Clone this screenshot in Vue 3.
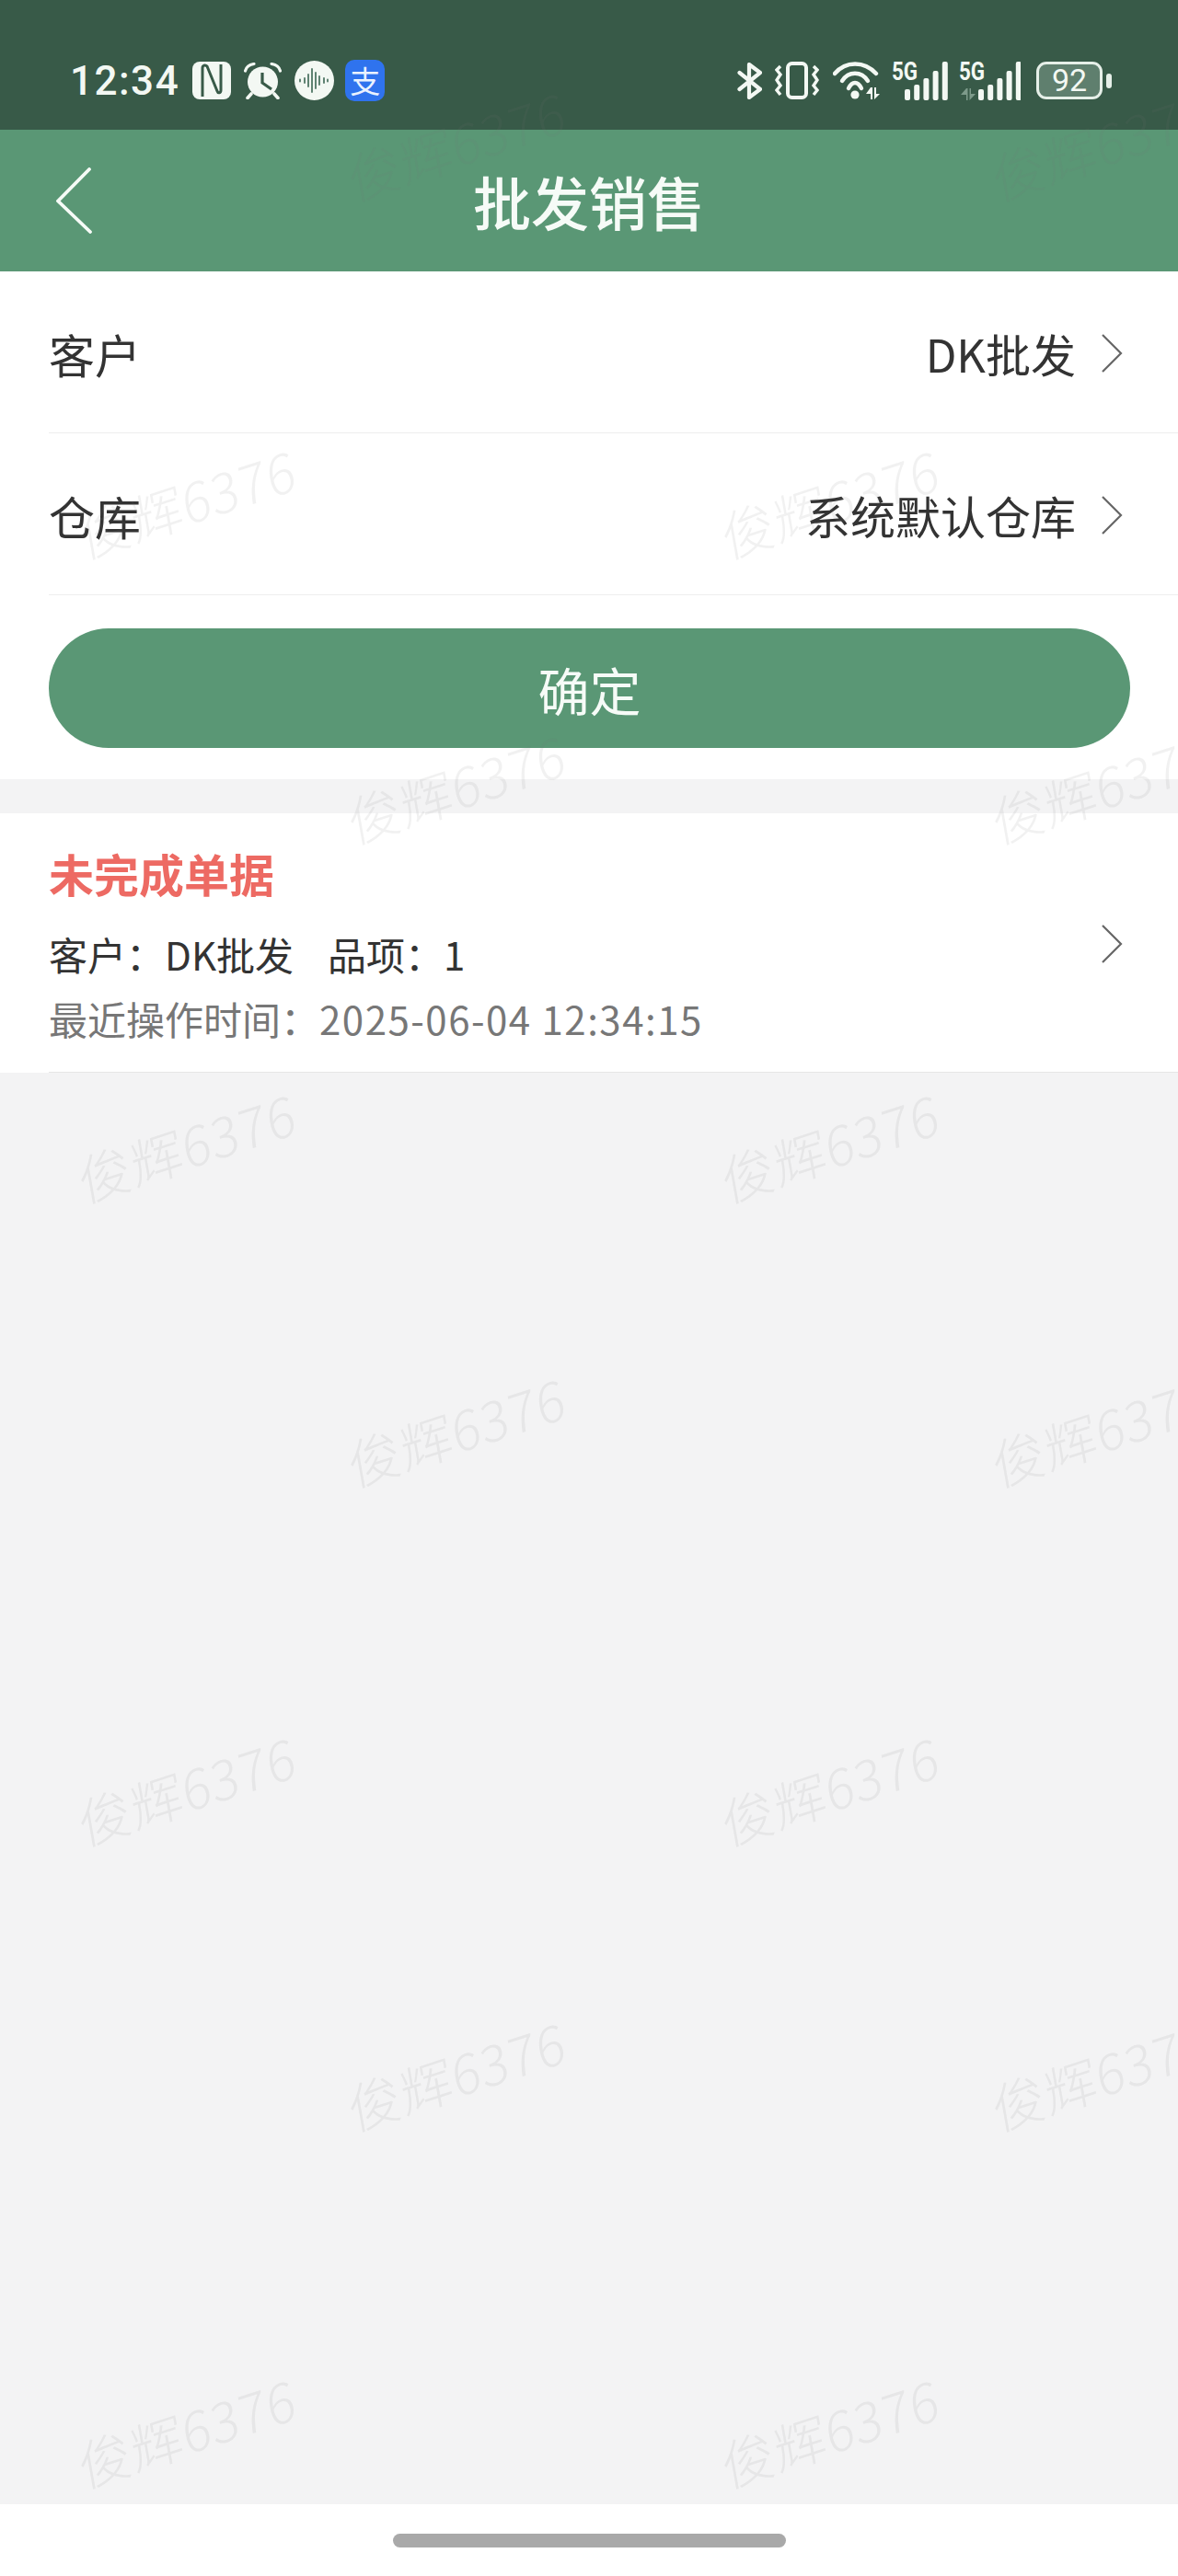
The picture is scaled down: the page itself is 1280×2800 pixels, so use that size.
<template>
  <div class="page">
    <div class="status-bar">
      <div class="status-left">
        <span class="clock">12:34</span>
        <!-- nfc -->
        <svg class="ic" width="42" height="41" viewBox="0 0 42 41">
          <rect width="42" height="41" rx="8" fill="#f3f8f3" />
          <path d="M11 38V7c0-3 3-4 5-2l11 27c1 3 4 2 4-1V3" fill="none" stroke="#385a48" stroke-width="3" />
        </svg>
        <!-- alarm -->
        <svg class="ic" width="41" height="40" viewBox="0 0 41 40">
          <circle cx="20.5" cy="21" r="16.5" fill="#f3f8f3" />
          <path d="M1.5 9 C3 4 6 2 11 1.5 M39.5 9 C38 4 35 2 30 1.5" fill="none" stroke="#f3f8f3" stroke-width="3.2" stroke-linecap="round" />
          <path d="M8 34 L4 38.5 M33 34 L37 38.5" stroke="#f3f8f3" stroke-width="3.6" stroke-linecap="round" />
          <path d="M20 11 V22 L30 29" fill="none" stroke="#385a48" stroke-width="3.2" />
        </svg>
        <!-- sound wave -->
        <svg class="ic" width="43" height="43" viewBox="0 0 43 43">
          <circle cx="21.5" cy="21.5" r="21.5" fill="#f3f8f3" />
          <path d="M6 20.5v2M11 19v5M15 15v13M19 9v25M23 13v17M27 17v9M32 19v5M36 20.5v2" stroke="#4f7564" stroke-width="1.8" stroke-linecap="round" />
        </svg>
        <!-- alipay -->
        <div class="alipay">支</div>
      </div>
      <div class="status-right">
        <!-- bluetooth -->
        <svg class="ic" width="27" height="40" viewBox="0 0 27 40">
          <path d="M2.5 11 L25 29 L13 38 V2 L25 11 L2.5 29" fill="none" stroke="#f3f8f3" stroke-width="4.2" stroke-linejoin="round" stroke-linecap="round" />
        </svg>
        <!-- vibrate -->
        <svg class="ic" width="48" height="41" viewBox="0 0 48 41">
          <rect x="14" y="2" width="20" height="37" rx="4.5" fill="none" stroke="#f3f8f3" stroke-width="4" />
          <path d="M6 5 L2 9 L6 14 L2 20 L6 26 L2 31 L6 36" fill="none" stroke="#f3f8f3" stroke-width="3.4" />
          <path d="M42 5 L46 9 L42 14 L46 20 L42 26 L46 31 L42 36" fill="none" stroke="#f3f8f3" stroke-width="3.4" />
        </svg>
        <!-- wifi -->
        <svg class="ic wifi" width="51" height="42" viewBox="0 0 51 42">
          <path d="M2 13 C14 -1 34 -1 47 13" fill="none" stroke="#f3f8f3" stroke-width="4.4" stroke-linecap="round" />
          <path d="M10 21 C17 10 31 10 38 21" fill="none" stroke="#f3f8f3" stroke-width="4.4" stroke-linecap="round" />
          <path d="M17 29 C21 21 27 21 31 29" fill="none" stroke="#f3f8f3" stroke-width="4.4" stroke-linecap="round" />
          <circle cx="24" cy="36" r="4.6" fill="#f3f8f3" />
          <path d="M41 28 L36 35 H41 V41 H43 V28Z M45 28 V41 L51 35 H47 V28Z" fill="#f3f8f3" />
        </svg>
        <!-- sim 1 -->
        <div class="sim">
          <span class="sim-label">5G</span>
          <svg width="47" height="42" viewBox="0 0 47 42">
            <rect v-for="(b, i) in bars" :key="i" :x="i * 10.2" :y="42 - b" width="6" :height="b" rx="2" fill="#f3f8f3" />
          </svg>
        </div>
        <!-- sim 2 -->
        <div class="sim sim-two">
          <span class="sim-label">5G</span>
          <svg width="66" height="42" viewBox="0 0 66 42">
            <path d="M7 29 L1 36 H7 V42 H8.5 V29Z M10.5 29 V42 L17 35 H12 V29Z" fill="#7d9a8a" />
            <rect v-for="(b, i) in bars" :key="i" :x="20 + i * 10.2" :y="42 - b" width="6" :height="b" rx="2" fill="#f3f8f3" />
          </svg>
        </div>
        <!-- battery -->
        <div class="battery">
          <div class="battery-body"><span>92</span></div>
          <div class="battery-cap"></div>
        </div>
      </div>
    </div>

    <div class="nav-bar">
      <svg class="nav-back" width="40" height="72" viewBox="0 0 40 72">
        <path d="M36 2 L2 36.5 L37 70" fill="none" stroke="#f6fbf7" stroke-width="3.8" stroke-linecap="round" stroke-linejoin="round" />
      </svg>
      <span class="nav-title">批发销售</span>
    </div>

    <div class="form">
      <div v-for="row in rows" :key="row.label" class="row">
        <span class="row-label">{{ row.label }}</span>
        <div class="row-right">
          <span>{{ row.value }}</span>
          <svg class="arrow" width="24" height="42" viewBox="0 0 24 42">
            <path d="M2 1 L22 21 L2 41" fill="none" stroke="#666" stroke-width="2.2" />
          </svg>
        </div>
      </div>
      <div class="btn-wrap">
        <div class="btn">确定</div>
      </div>
    </div>

    <div class="draft">
      <div class="draft-inner">
        <div class="draft-info">
          <div class="draft-title">未完成单据</div>
          <div class="draft-line"><span>客户：DK批发</span><span>品项：1</span></div>
          <div class="draft-time">最近操作时间：<span class="draft-date">2025-06-04 12:34:15</span></div>
        </div>
        <svg class="arrow" width="24" height="42" viewBox="0 0 24 42">
          <path d="M2 1 L22 21 L2 41" fill="none" stroke="#666" stroke-width="2.2" />
        </svg>
      </div>
    </div>

    <div class="rest"></div>

    <div class="home-bar">
      <div class="home-indicator"></div>
    </div>

    <span
      v-for="m in marks"
      :key="m.x + '-' + m.y"
      class="mark"
      :style="{ left: m.x + 'px', top: m.y + 'px' }"
    >俊辉6376</span>
  </div>
</template>

<script setup>
const rows = [
  { label: '客户', value: 'DK批发' },
  { label: '仓库', value: '系统默认仓库' }
]

const bars = [12, 17, 24, 32, 42]

// watermark sits on a staggered grid, two columns per row
const marks = []
const rowsA = [545, 1245, 1944, 2642]
const rowsB = [156, 855, 1554, 2254]
rowsA.forEach((y) => {
  marks.push({ x: 203, y }, { x: 902, y })
})
rowsB.forEach((y) => {
  marks.push({ x: 496, y }, { x: 1196, y })
})
</script>

<style>
html,
body {
  margin: 0;
  padding: 0;
}
</style>

<style scoped>
.page {
  position: relative;
  width: 1280px;
  height: 2800px;
  overflow: hidden;
  display: flex;
  flex-direction: column;
  background: #f3f3f4;
  font-family: "Noto Sans CJK SC", "Liberation Sans", sans-serif;
  color: #333;
}

.status-bar {
  height: 141px;
  flex: none;
  background: #385a48;
  display: flex;
  justify-content: space-between;
  align-items: center;
  padding: 34px 72px 0 76px;
  box-sizing: border-box;
}
.status-left,
.status-right {
  display: flex;
  align-items: center;
  gap: 14px;
}
.clock {
  font-family: Roboto, "Liberation Sans", sans-serif;
  font-size: 44px;
  line-height: 48px;
  letter-spacing: 1.5px;
  font-weight: 500;
  color: #f3f8f3;
}
.ic {
  display: block;
  flex: none;
}
.alipay {
  width: 43px;
  height: 45px;
  border-radius: 10px;
  background: #2f73ee;
  color: #eaf2ff;
  font-size: 33px;
  line-height: 44px;
  text-align: center;
  margin-left: -2px;
}
.wifi {
  margin-left: 1px;
}
.sim {
  position: relative;
  width: 61px;
  height: 42px;
  display: flex;
  justify-content: flex-end;
  align-items: flex-end;
  margin-left: -1px;
}
.sim-two {
  width: 67px;
  margin-left: -2px;
}
.sim-label {
  position: absolute;
  left: 0;
  top: -4px;
  font-family: Roboto, "Liberation Sans", sans-serif;
  font-weight: 700;
  font-size: 28px;
  line-height: 30px;
  color: #f3f8f3;
  transform: scaleX(0.8);
  transform-origin: left top;
}
.battery {
  display: flex;
  align-items: center;
  gap: 4px;
  margin-left: 3px;
}
.battery-body {
  width: 66px;
  height: 35px;
  border: 3px solid #e6efe8;
  border-radius: 11px;
  background: #5f7f6e;
  display: flex;
  align-items: center;
  justify-content: center;
  color: #f3f8f3;
  font-family: Roboto, "Liberation Sans", sans-serif;
  font-size: 34px;
  line-height: 35px;
}
.battery-cap {
  width: 6px;
  height: 16px;
  border-radius: 3px;
  background: #e6efe8;
}

.nav-bar {
  position: relative;
  height: 154px;
  flex: none;
  background: #5a9775;
  display: flex;
  align-items: center;
  justify-content: center;
}
.nav-back {
  position: absolute;
  left: 61px;
  top: 41px;
}
.nav-title {
  font-size: 63px;
  font-weight: 500;
  color: #f6fbf7;
  line-height: 76px;
}

.form {
  flex: none;
  background: #fff;
  height: 552px;
  padding-left: 53px;
  box-sizing: border-box;
}
.row {
  height: 176px;
  box-sizing: border-box;
  border-bottom: 1px solid #eeeeee;
  display: flex;
  align-items: center;
  justify-content: space-between;
  padding: 2px 60px 0 0;
  font-size: 49px;
  color: #333;
}
.row-label {
  font-size: 50px;
}
.row-right {
  display: flex;
  align-items: center;
  gap: 27px;
}
.btn-wrap {
  padding: 36px 52px 0 0;
}
.btn {
  height: 130px;
  border-radius: 65px;
  background: #5a9775;
  color: #f6fbf7;
  font-size: 56px;
  line-height: 132px;
  text-align: center;
}

.draft {
  margin-top: 37px;
  flex: none;
  height: 282px;
  background: #fff;
  padding-left: 53px;
  box-sizing: border-box;
}
.draft-inner {
  height: 100%;
  box-sizing: border-box;
  border-bottom: 1px solid #e6e6e6;
  padding: 35px 60px 0 0;
  display: flex;
  justify-content: space-between;
}
.draft-inner .arrow {
  margin-top: 86px;
}
.draft-title {
  font-size: 49px;
  font-weight: 700;
  line-height: 60px;
  color: #ed6a63;
}
.draft-line {
  display: flex;
  gap: 37px;
  margin-top: 30px;
  font-size: 42px;
  line-height: 56px;
  color: #333;
}
.draft-time {
  margin-top: 14px;
  font-size: 42px;
  line-height: 56px;
  color: #777;
}
.draft-date {
  letter-spacing: 1.5px;
}

.rest {
  flex: 1;
}
.home-bar {
  height: 78px;
  flex: none;
  background: #fff;
  display: flex;
  justify-content: center;
  padding-top: 32px;
  box-sizing: border-box;
}
.home-indicator {
  width: 427px;
  height: 15px;
  border-radius: 8px;
  background: #a9a9a9;
}

.mark {
  position: absolute;
  transform: translate(-50%, -50%) rotate(-18deg) skewX(-8deg);
  font-size: 58px;
  line-height: 66px;
  font-weight: 300;
  letter-spacing: 1px;
  white-space: nowrap;
  color: rgba(120, 120, 120, 0.1);
  pointer-events: none;
}
</style>
